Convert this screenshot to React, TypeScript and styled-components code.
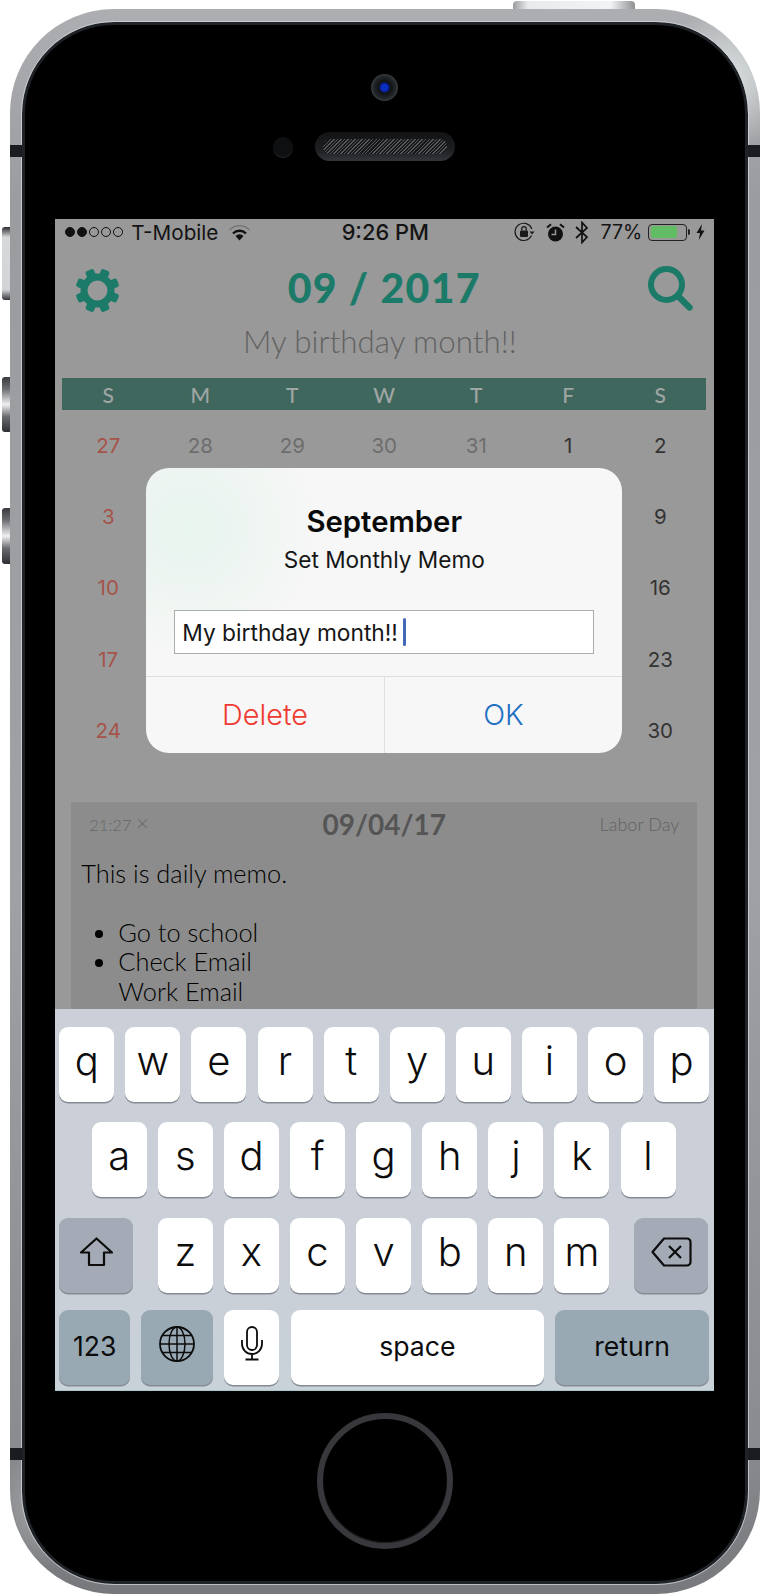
import React from "react";
import styled, { createGlobalStyle } from "styled-components";

const Global = createGlobalStyle`
  html, body { margin: 0; padding: 0; background: #fff; }
  body { width: 760px; height: 1594px; overflow: hidden; }
  * { box-sizing: border-box; }
`;

const UI = `Inter, "Noto Sans", sans-serif`;
const AV = `Lato, "Open Sans", sans-serif`;
const TEAL = "#1c7a69";

const Phone = styled.div`
  position: relative;
  width: 750.5px;
  height: 1584.5px;
  margin: 9px 0 0 9.5px;
  padding: 13px 12px 10px 12px;
  border-radius: 104px;
  background:
    radial-gradient(circle 70px at 715px 70px, rgba(232, 240, 240, 0.85) 0%, rgba(232, 240, 240, 0) 100%),
    radial-gradient(circle 60px at 40px 1500px, rgba(190, 194, 196, 0.6) 0%, rgba(190, 194, 196, 0) 100%),
    linear-gradient(180deg, #adaeb1 0%, #9b9c9f 12%, #a0a1a4 55%, #8b8c8f 90%, #77787b 100%);
`;
const TopButton = styled.div`
  position: absolute;
  left: 503.5px;
  top: -8px;
  width: 122px;
  height: 8px;
  border-radius: 4px 4px 0 0;
  background: linear-gradient(90deg, #9a9b9e 0%, #e9eaec 12%, #f2f3f4 80%, #8f9093 100%);
`;
const SideButton = styled.div<{ $top: number; $h: number; $pale?: boolean }>`
  position: absolute;
  left: -8px;
  top: ${(p) => p.$top}px;
  width: 8px;
  height: ${(p) => p.$h}px;
  border-radius: 3px 0 0 3px;
  background: ${(p) =>
    p.$pale
      ? "linear-gradient(180deg, #2c2d30 0%, #8d8e91 8%, #d8d9db 14%, #d2d3d6 86%, #77787b 94%, #333438 100%)"
      : "linear-gradient(180deg, #3a3b3e 0%, #6d6e72 22%, #f0f0f2 50%, #6a6b6f 72%, #2f3033 100%)"};
`;
const Band = styled.div<{ $top: number; $right?: boolean }>`
  position: absolute;
  top: ${(p) => p.$top}px;
  ${(p) => (p.$right ? "right: 0;" : "left: 0;")}
  width: 12px;
  height: 12px;
  background: #1b1c1f;
`;
const Bezel = styled.div`
  height: 100%;
  padding-top: 49px;
  border: 3px solid #1f2327;
  border-radius: 92px;
  outline: 1px solid rgba(214, 215, 217, 0.75);
  background: #000;
  display: flex;
  flex-direction: column;
  align-items: center;
`;
const Camera = styled.div`
  width: 27px;
  height: 27px;
  border-radius: 50%;
  background: radial-gradient(circle at 50% 50%, #0a2fc4 0 3px, #0a1a78 4.5px, #101214 6px, #24272a 11px, #3a3d40 13.5px);
  display: flex;
  align-items: center;
  justify-content: center;
`;
const SensorRow = styled.div`
  width: 100%;
  margin-top: 31px;
  display: grid;
  grid-template-columns: 1fr auto 1fr;
  align-items: center;
`;
const Proximity = styled.div`
  justify-self: end;
  margin-right: 22px;
  width: 20px;
  height: 20px;
  border-radius: 50%;
  background: radial-gradient(circle at 50% 40%, #0e0f10 0 60%, #1b1c1e 100%);
  box-shadow: 0 1px 0 #2c2e30;
`;
const Speaker = styled.div`
  width: 140px;
  height: 29px;
  padding: 7px 8px;
  border-radius: 15px;
  background: linear-gradient(180deg, #121315 0%, #1c1e20 60%, #33363a 100%);
`;
const Mesh = styled.div`
  height: 15px;
  border-radius: 7px;
  background: repeating-linear-gradient(135deg, #55585b 0 1px, #17181a 1px 2.5px);
`;
const Screen = styled.div`
  position: relative;
  width: 659px;
  height: 1172px;
  margin-top: 58px;
  flex: none;
  overflow: hidden;
  background: #999;
`;
const HomeButton = styled.div`
  width: 136px;
  height: 136px;
  margin-top: 22px;
  flex: none;
  border-radius: 50%;
  border: 6px solid #37373c;
  box-shadow: inset 0 -1px 1px #222;
`;

const StatusBar = styled.div`
  height: 24px;
  padding: 0 9px 0 10px;
  display: grid;
  grid-template-columns: 1fr auto 1fr;
  align-items: center;
  font-family: ${UI};
  font-size: 20px;
  color: #141414;
`;
const StatusLeft = styled.div`
  display: flex;
  align-items: center;
`;
const StatusRight = styled.div`
  display: flex;
  align-items: center;
  justify-content: flex-end;
`;
const Dot = styled.span<{ $on?: boolean }>`
  width: 10px;
  height: 10px;
  margin-right: 2px;
  border-radius: 50%;
  border: 1px solid #111;
  background: ${(p) => (p.$on ? "#111" : "transparent")};
`;
const Carrier = styled.span`
  margin: 0 10px 0 6px;
  font-size: 20.7px;
  font-weight: 400;
`;
const Clock = styled.span`
  font-weight: 500;
  font-size: 21.8px;
`;
const Percent = styled.span`
  margin: 0 6px 0 10px;
  font-size: 19.6px;
`;
const Battery = styled.span`
  position: relative;
  width: 39px;
  height: 17px;
  padding: 1.5px;
  margin-right: 9px;
  border: 1px solid #222;
  border-radius: 4px;
  display: flex;
`;
const BatteryFill = styled.span`
  width: 77%;
  border-radius: 2px;
  background: #61bd64;
`;
const BatteryNub = styled.span`
  position: absolute;
  right: -4px;
  top: 4.5px;
  width: 2.5px;
  height: 6px;
  border-radius: 0 2px 2px 0;
  background: #222;
`;
const IconSlot = styled.svg<{ $ml?: number }>`
  margin-left: ${(p) => p.$ml ?? 0}px;
  flex: none;
  display: block;
`;

const Header = styled.div`
  margin-top: 20px;
  padding: 0 21px 0 20px;
  height: 45px;
  display: grid;
  grid-template-columns: 1fr auto 1fr;
  align-items: center;
`;
const Title = styled.div`
  padding-bottom: 6px;
  font-family: ${AV};
  font-weight: 900;
  font-size: 41px;
  letter-spacing: 1.3px;
  color: ${TEAL};
`;
const RightCell = styled.div`
  justify-self: end;
`;
const Subtitle = styled.div`
  margin-top: 13px;
  padding-right: 10px;
  height: 40px;
  line-height: 40px;
  text-align: center;
  font-family: ${AV};
  font-weight: 300;
  font-size: 31.3px;
  color: #626262;
`;
const WeekBar = styled.div`
  margin: 17px 8px 0 7px;
  height: 32px;
  display: grid;
  grid-template-columns: repeat(7, 1fr);
  align-items: center;
  background: #3f675e;
  font-family: ${AV};
  font-size: 21px;
  font-weight: 500;
  color: #9fa6a3;
  text-align: center;
`;
const Grid = styled.div`
  margin: 0 8px 0 7px;
  display: grid;
  grid-template-columns: repeat(7, 1fr);
  grid-auto-rows: 71.2px;
`;
const Day = styled.div<{ $tone: "sun" | "mute" | "ink" }>`
  display: flex;
  align-items: center;
  justify-content: center;
  font-family: ${UI};
  font-size: 20.5px;
  color: ${(p) => (p.$tone === "sun" ? "#a5544a" : p.$tone === "mute" ? "#6d6d6d" : "#333")};
`;
const MemoCard = styled.div`
  margin: 36px 17px 0 16px;
  height: 300px;
  background: #8c8c8c;
`;
const MemoHead = styled.div`
  height: 44px;
  padding: 0 18px;
  display: grid;
  grid-template-columns: 1fr auto 1fr;
  align-items: center;
  font-family: ${AV};
`;
const MemoTime = styled.div`
  font-size: 16.5px;
  font-weight: 300;
  color: #666;
`;
const CloseMark = styled.span`
  font-size: 22px;
  line-height: 1;
`;
const MemoDate = styled.div`
  font-size: 28px;
  font-weight: 700;
  color: #555;
`;
const MemoHoliday = styled.div`
  justify-self: end;
  font-size: 18px;
  font-weight: 300;
  color: #626262;
`;
const MemoBody = styled.div`
  margin-top: 13px;
  padding-left: 10px;
  font-family: ${AV};
  font-weight: 300;
  font-size: 25.4px;
  line-height: 29.5px;
  color: #000;
`;
const MemoPara = styled.p`
  margin: 0 0 29.5px;
`;
const MemoList = styled.ul`
  margin: 0;
  padding-left: 37px;
`;

const Dialog = styled.div`
  position: absolute;
  left: 91px;
  top: 249px;
  width: 476px;
  height: 285px;
  padding-top: 36px;
  border-radius: 23px;
  background:
    radial-gradient(circle 135px at 42px 60px, #e8f4ee 0%, #ebf4f0 30%, #f1f6f3 62%, rgba(247, 247, 247, 0) 100%),
    #f7f7f7;
  font-family: ${UI};
  text-align: center;
`;
const DialogTitle = styled.div`
  height: 36px;
  line-height: 36px;
  font-size: 29.3px;
  font-weight: 600;
  color: #0a0a0a;
`;
const DialogSub = styled.div`
  margin-top: 5px;
  height: 30px;
  line-height: 30px;
  font-size: 22.6px;
  color: #161616;
`;
const InputBox = styled.div`
  margin: 35px 28px 22px;
  height: 44px;
  padding-left: 7px;
  display: flex;
  align-items: center;
  border: 1px solid #a9aeab;
  background: #fff;
  font-size: 22.75px;
  color: #161616;
`;
const Caret = styled.span`
  width: 3.5px;
  height: 28px;
  margin-left: 5px;
  border-radius: 2px;
  background: #4468b8;
`;
const ButtonRow = styled.div`
  height: 77px;
  display: flex;
  border-top: 1px solid #dedede;
`;
const DialogButton = styled.div<{ $danger?: boolean }>`
  flex: 1;
  padding-bottom: 2px;
  display: flex;
  align-items: center;
  justify-content: center;
  font-size: 28.8px;
  font-weight: 300;
  color: ${(p) => (p.$danger ? "#ef3a32" : "#1f70c4")};
  & + & {
    border-left: 1px solid #e2e2e2;
  }
`;

const Keyboard = styled.div`
  position: absolute;
  left: 0;
  right: 0;
  bottom: 0;
  height: 382px;
  padding: 18px 0 0 4px;
  border-bottom: 1px solid #a8c9cc;
  background: linear-gradient(180deg, #cbcfd8 0%, #cacfd8 70%, #c8d2d8 100%);
`;
const KeyRow = styled.div<{ $mt?: number; $pl?: number }>`
  display: flex;
  gap: 11.1px;
  margin-top: ${(p) => p.$mt ?? 0}px;
  padding-left: ${(p) => p.$pl ?? 0}px;
`;
const Key = styled.div<{ $w?: number; $tone?: "plain" | "shift" | "blue"; $label?: boolean; $ml?: number }>`
  flex: none;
  width: ${(p) => p.$w ?? 55}px;
  height: 75px;
  margin-left: ${(p) => p.$ml ?? 0}px;
  display: flex;
  align-items: center;
  justify-content: center;
  border-radius: 9px;
  background: ${(p) => (p.$tone === "shift" ? "#a4abb6" : p.$tone === "blue" ? "#98a9b4" : "#fff")};
  box-shadow: 0 1.5px 0 #858b94;
  font-family: ${UI};
  font-weight: ${(p) => (p.$label ? 400 : 300)};
  font-size: ${(p) => (p.$label ? "26.6px" : "40px")};
  color: #0c0c0c;
  padding-bottom: ${(p) => (p.$label ? 3 : 8)}px;
`;

const Gear = () => (
  <svg width="45" height="45" viewBox="0 0 45 45">
    <g fill={TEAL}>
      {[0, 45, 90, 135, 180, 225, 270, 315].map((a) => (
        <rect key={a} x="18" y="0.5" width="9" height="9" rx="2.2" transform={`rotate(${a + 22.5} 22.5 22.5)`} />
      ))}
    </g>
    <circle cx="22.5" cy="22.5" r="13.5" fill="none" stroke={TEAL} strokeWidth="7" />
  </svg>
);
const Search = () => (
  <svg width="45" height="45" viewBox="0 0 45 45">
    <circle cx="18.5" cy="18.5" r="15.5" fill="none" stroke={TEAL} strokeWidth="6" />
    <path d="M30 30 L41.5 41.5" stroke={TEAL} strokeWidth="6.5" strokeLinecap="round" />
  </svg>
);
const Wifi = () => (
  <IconSlot width="23" height="17" viewBox="0 0 23 17">
    <path d="M1.5 6 A14 14 0 0 1 21.5 6" fill="none" stroke="#777" strokeWidth="1.6" />
    <path d="M5 9.5 A9.2 9.2 0 0 1 18 9.5" fill="none" stroke="#111" strokeWidth="2.4" />
    <path d="M11.5 16.5 L7.5 12 A5.6 5.6 0 0 1 15.5 12 Z" fill="#111" />
  </IconSlot>
);
const RotationLock = () => (
  <IconSlot width="21" height="20" viewBox="0 0 21 20">
    <path d="M17.5 13.5 A8.6 8.6 0 1 1 17.8 7" fill="none" stroke="#1a1a1a" strokeWidth="1.2" />
    <path d="M15.5 9.5 L20.5 9.5 L18 12.5 Z" fill="#1a1a1a" />
    <rect x="6" y="8.5" width="8" height="6.5" rx="1" fill="#1a1a1a" />
    <path d="M7.8 8.5 V6.8 A2.2 2.2 0 0 1 12.2 6.8 V8.5" fill="none" stroke="#1a1a1a" strokeWidth="1.3" />
  </IconSlot>
);
const Alarm = () => (
  <IconSlot $ml={11} width="19" height="19" viewBox="0 0 19 19">
    <circle cx="9.5" cy="11" r="7.5" fill="#111" />
    <path d="M9.5 6.5 V11.5 H5.5" fill="none" stroke="#999" strokeWidth="1.5" />
    <path d="M1 4.5 L5 1.2 M18 4.5 L14 1.2" stroke="#111" strokeWidth="2" />
  </IconSlot>
);
const Bluetooth = () => (
  <IconSlot $ml={9} width="16" height="23" viewBox="0 0 16 23">
    <path d="M2 6 L13 16 L8 21.5 V1.5 L13 7 L2 17" fill="none" stroke="#111" strokeWidth="1.7" />
  </IconSlot>
);
const Bolt = () => (
  <IconSlot width="9" height="16" viewBox="0 0 9 16">
    <path d="M6 0 L0.5 9 H4 L2.8 16 L8.5 6.5 H5 Z" fill="#111" />
  </IconSlot>
);
const ShiftIcon = () => (
  <svg width="35" height="30" viewBox="0 0 35 30">
    <path d="M17.5 1.5 L33 15.5 H25 V28 H10 V15.5 H2 Z" fill="none" stroke="#0c0c0c" strokeWidth="2.2" strokeLinejoin="round" />
  </svg>
);
const BackspaceIcon = () => (
  <svg width="41" height="30" viewBox="0 0 41 30">
    <path d="M13 1.5 H36 A3.5 3.5 0 0 1 39.5 5 V25 A3.5 3.5 0 0 1 36 28.5 H13 L1.5 15 Z" fill="none" stroke="#0c0c0c" strokeWidth="2.2" strokeLinejoin="round" />
    <path d="M18 9 L30 21 M30 9 L18 21" stroke="#0c0c0c" strokeWidth="2.2" />
  </svg>
);
const GlobeIcon = () => (
  <svg width="36" height="36" viewBox="0 0 36 36" fill="none" stroke="#0c0c0c" strokeWidth="1.5">
    <circle cx="18" cy="18" r="17" strokeWidth="1.8" />
    <ellipse cx="18" cy="18" rx="8" ry="17" />
    <path d="M18 1 V35 M1 18 H35 M3.5 9.5 H32.5 M3.5 26.5 H32.5" />
  </svg>
);
const MicIcon = () => (
  <svg width="22" height="35" viewBox="0 0 22 35" fill="none" stroke="#0c0c0c" strokeWidth="1.8">
    <rect x="6" y="1" width="10" height="23" rx="5" />
    <path d="M1 14 V18 A10 10 0 0 0 21 18 V14 M11 28 V33.5 M4.5 33.5 H17.5" />
  </svg>
);

const WEEK = ["S", "M", "T", "W", "T", "F", "S"];
type Cell = { n?: number; tone: "sun" | "mute" | "ink" };
const DAYS: Cell[] = [
  { n: 27, tone: "sun" }, { n: 28, tone: "mute" }, { n: 29, tone: "mute" }, { n: 30, tone: "mute" }, { n: 31, tone: "mute" },
  { n: 1, tone: "ink" }, { n: 2, tone: "ink" },
  ...Array.from({ length: 28 }, (_, i): Cell => {
    const col = i % 7;
    // the dialog covers the middle five columns of these rows
    if (col === 0) return { n: i + 3, tone: "sun" };
    if (col === 6) return { n: i + 3, tone: "ink" };
    return { tone: "ink" };
  }),
];
const ROW1 = "qwertyuiop".split("");
const ROW2 = "asdfghjkl".split("");
const ROW3 = "zxcvbnm".split("");

export default function App() {
  return (
    <>
      <Global />
      <Phone>
        <TopButton />
        <SideButton $top={218} $h={73} $pale />
        <SideButton $top={368} $h={55} />
        <SideButton $top={499} $h={56} />
        <Band $top={136} />
        <Band $top={136} $right />
        <Band $top={1439} />
        <Band $top={1439} $right />
        <Bezel>
          <Camera />
          <SensorRow>
            <Proximity />
            <Speaker>
              <Mesh />
            </Speaker>
          </SensorRow>
          <Screen>
            <StatusBar>
              <StatusLeft>
                <Dot $on />
                <Dot $on />
                <Dot />
                <Dot />
                <Dot />
                <Carrier>T-Mobile</Carrier>
                <Wifi />
              </StatusLeft>
              <Clock>9:26 PM</Clock>
              <StatusRight>
                <RotationLock />
                <Alarm />
                <Bluetooth />
                <Percent>77%</Percent>
                <Battery>
                  <BatteryFill />
                  <BatteryNub />
                </Battery>
                <Bolt />
              </StatusRight>
            </StatusBar>
            <Header>
              <Gear />
              <Title>09 / 2017</Title>
              <RightCell>
                <Search />
              </RightCell>
            </Header>
            <Subtitle>My birthday month!!</Subtitle>
            <WeekBar>
              {WEEK.map((d, i) => (
                <span key={i}>{d}</span>
              ))}
            </WeekBar>
            <Grid>
              {DAYS.map((d, i) => (
                <Day key={i} $tone={d.tone}>
                  {d.n}
                </Day>
              ))}
            </Grid>
            <MemoCard>
              <MemoHead>
                <MemoTime>
                  21:27 <CloseMark>×</CloseMark>
                </MemoTime>
                <MemoDate>09/04/17</MemoDate>
                <MemoHoliday>Labor Day</MemoHoliday>
              </MemoHead>
              <MemoBody>
                <MemoPara>This is daily memo.</MemoPara>
                <MemoList>
                  <li>Go to school</li>
                  <li>
                    Check Email
                    <br />
                    Work Email
                  </li>
                </MemoList>
              </MemoBody>
            </MemoCard>
            <Dialog>
              <DialogTitle>September</DialogTitle>
              <DialogSub>Set Monthly Memo</DialogSub>
              <InputBox>
                My birthday month!!
                <Caret />
              </InputBox>
              <ButtonRow>
                <DialogButton $danger>Delete</DialogButton>
                <DialogButton>OK</DialogButton>
              </ButtonRow>
            </Dialog>
            <Keyboard>
              <KeyRow>
                {ROW1.map((k) => (
                  <Key key={k}>{k}</Key>
                ))}
              </KeyRow>
              <KeyRow $mt={20} $pl={32.5}>
                {ROW2.map((k) => (
                  <Key key={k}>{k}</Key>
                ))}
              </KeyRow>
              <KeyRow $mt={21}>
                <Key $w={74} $tone="shift">
                  <ShiftIcon />
                </Key>
                <Key $ml={13.5}>z</Key>
                {ROW3.slice(1).map((k) => (
                  <Key key={k}>{k}</Key>
                ))}
                <Key $w={74} $ml={13.9} $tone="shift">
                  <BackspaceIcon />
                </Key>
              </KeyRow>
              <KeyRow $mt={17}>
                <Key $w={71} $tone="blue" $label>
                  123
                </Key>
                <Key $w={72} $tone="blue">
                  <GlobeIcon />
                </Key>
                <Key>
                  <MicIcon />
                </Key>
                <Key $w={253.6} $label>
                  space
                </Key>
                <Key $w={153.8} $tone="blue" $label>
                  return
                </Key>
              </KeyRow>
            </Keyboard>
          </Screen>
          <HomeButton />
        </Bezel>
      </Phone>
    </>
  );
}
